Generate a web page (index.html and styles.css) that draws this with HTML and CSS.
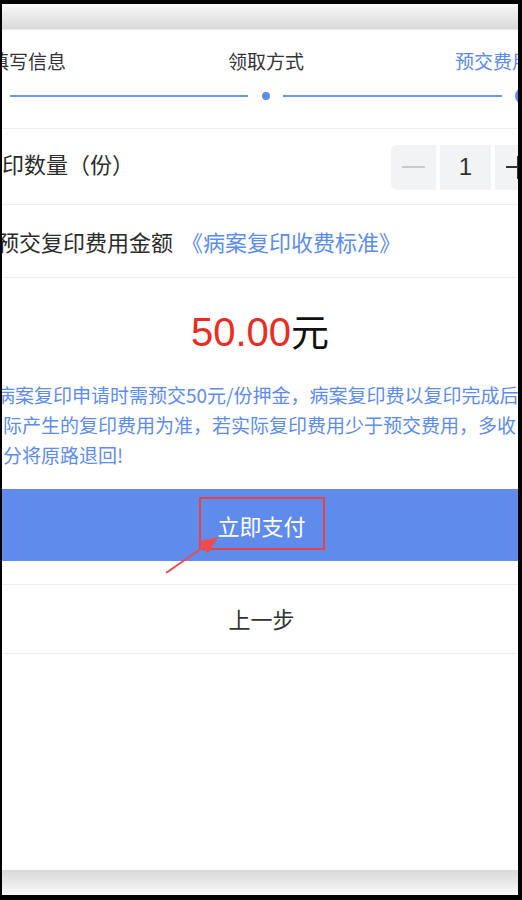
FILE: index.html
```html
<!DOCTYPE html>
<html lang="zh-CN">
<head>
<meta charset="utf-8">
<title>预交费用</title>
<link rel="stylesheet" href="styles.css">
</head>
<body>
<div class="frame">
  <div class="topbar"></div>
  <div class="content">
    <div class="steps">
      <div class="step-labels">
        <span class="step-label step-first">填写信息</span>
        <span class="step-label step-second">领取方式</span>
        <span class="step-label step-third active">预交费用</span>
      </div>
      <div class="step-track">
        <span class="step-line line-a"></span>
        <span class="step-dot dot-a"></span>
        <span class="step-line line-b"></span>
        <span class="step-dot dot-b"></span>
      </div>
    </div>

    <div class="row row-count">
      <span class="row-label label-count">复印数量（份）</span>
      <div class="stepper">
        <span class="stepper-btn minus"><i class="bar h"></i></span>
        <span class="stepper-input">1</span>
        <span class="stepper-btn plus"><i class="bar h"></i><i class="bar v"></i></span>
      </div>
    </div>

    <div class="row row-fee">
      <span class="row-label label-fee">预交复印费用金额<a class="link">《病案复印收费标准》</a></span>
    </div>

    <div class="amount-block">
      <div class="amount"><span class="amount-num">50.00</span><span class="amount-unit">元</span></div>
      <p class="notice">病案复印申请时需预交50元/份押金，病案复印费以复印完成后<br>实际产生的复印费用为准，若实际复印费用少于预交费用，多收<br>部分将原路退回!</p>
    </div>

    <div class="pay">
      <span class="pay-text">立即支付</span>
      <span class="mark-box"></span>
      <svg class="mark-arrow" width="230" height="90" viewBox="0 0 230 90">
        <line x1="164" y1="84" x2="203" y2="57" stroke="#f04a4a" stroke-width="2"/>
        <polygon points="216,48 205.5,64.5 197,52.5" fill="#f04a4a"/>
      </svg>
    </div>

    <div class="prev">上一步</div>
  </div>
  <div class="bottombar"></div>
</div>
</body>
</html>
```

FILE: styles.css
```css
* { box-sizing: border-box; }
html, body { margin: 0; padding: 0; }
body {
  background: #000;
  font-family: "Noto Sans CJK SC", "Noto Sans", sans-serif;
  color: #323233;
}
.frame {
  margin: 4px 4px 0 2px;
  width: 516px;
  height: 891px;
  background: #fff;
  display: flex;
  flex-direction: column;
  overflow: hidden;
}
.topbar {
  height: 26px;
  flex: none;
  background: linear-gradient(#f9f9f9, #d9d9d9);
  border-bottom: 1px solid #ececec;
}
.content { flex: 1; display: flex; flex-direction: column; }
.bottombar {
  height: 25px;
  flex: none;
  background: linear-gradient(#d8d8d8, #f9f9f9);
}

/* steps */
.steps {
  height: 99px;
  flex: none;
  padding-top: 18px;
  border-bottom: 1px solid #eeeff1;
}
.step-labels { display: flex; white-space: nowrap; }
.step-label { font-size: 19px; line-height: 26px; color: #333; }
.step-first { margin-left: -12px; }
.step-second { margin-left: 162px; }
.step-third { margin-left: 151px; }
.step-label.active { color: #5b8cf0; }
.step-track {
  display: flex;
  align-items: center;
  height: 16px;
  margin-top: 14px;
}
.step-line { height: 2px; background: #6b97f2; flex: none; }
.line-a { margin-left: 8px; width: 238px; }
.line-b { margin-left: 13px; width: 219px; }
.step-dot { flex: none; border-radius: 50%; background: #5b8cf0; }
.dot-a { margin-left: 14px; width: 8px; height: 8px; }
.dot-b { margin-left: 13px; width: 16px; height: 16px; }

/* rows */
.row {
  display: flex;
  align-items: center;
  border-bottom: 1px solid #eeeff1;
  flex: none;
  white-space: nowrap;
}
.row-count { height: 76px; }
.row-fee { height: 73px; }
.row-label { font-size: 22px; line-height: 30px; color: #2b2b2b; }
.label-count { margin-left: -22px; margin-bottom: 7px; }
.label-fee { margin-left: -5px; }
.link { color: #5b8cf0; text-decoration: none; margin-left: 8px; }

.stepper {
  display: flex;
  gap: 4px;
  margin-left: auto;
  margin-right: -22px;
  margin-top: 1px;
}
.stepper-btn {
  width: 45px;
  height: 45px;
  background: #f2f3f5;
  position: relative;
  display: block;
}
.stepper-btn.minus { border-radius: 6px 0 0 6px; }
.stepper-btn.plus { border-radius: 0 6px 6px 0; }
.bar { position: absolute; left: 50%; top: 50%; display: block; }
.bar.h { width: 23px; height: 2px; margin: -1px 0 0 -11.5px; }
.bar.v { width: 2px; height: 23px; margin: -11.5px 0 0 -1px; }
.minus .bar { background: #c8c9cc; }
.plus .bar { background: #323233; }
.stepper-input {
  width: 51px;
  height: 45px;
  background: #f2f3f5;
  display: flex;
  align-items: center;
  justify-content: center;
  font-family: "Liberation Sans", "Noto Sans", sans-serif;
  font-size: 24px;
  color: #323233;
}

/* amount */
.amount-block { padding-top: 30px; flex: none; height: 211px; }
.amount {
  text-align: center;
  line-height: 44px;
  height: 44px;
  white-space: nowrap;
}
.amount-num {
  font-family: "Liberation Sans", "Noto Sans", sans-serif;
  font-size: 40px;
  color: #ec2b22;
}
.amount-unit { font-size: 38px; color: #111; }
.notice {
  margin: 28px 0 0 -18px;
  text-indent: 12px;
  font-size: 19px;
  line-height: 30px;
  color: #5b8cf0;
  white-space: nowrap;
}

/* pay */
.pay {
  position: relative;
  height: 72px;
  flex: none;
  background: #5f8bed;
  display: flex;
  align-items: center;
  justify-content: center;
}
.pay-text { font-size: 22px; color: #fff; margin-left: 3px; }
.mark-box {
  position: absolute;
  left: 197px;
  top: 8px;
  width: 126px;
  height: 53px;
  border: 2px solid #ea4141;
}
.mark-arrow { position: absolute; left: 0; top: 0; overflow: visible; }

.prev {
  margin-top: 23px;
  height: 70px;
  flex: none;
  border-top: 1px solid #eeeff1;
  border-bottom: 1px solid #eeeff1;
  display: flex;
  align-items: center;
  justify-content: center;
  font-size: 22px;
  color: #323233;
  padding-left: 3px;
  padding-bottom: 2px;
}
```
